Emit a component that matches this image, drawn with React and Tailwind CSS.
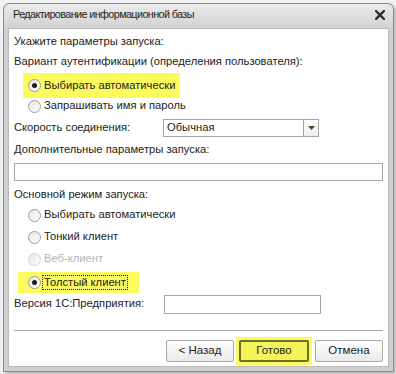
import React from 'react';

const Radio = ({ checked, disabled }) => (
  <span
    className={`w-[13px] h-[13px] rounded-full border flex items-center justify-center shrink-0 bg-gradient-to-br from-[#e6e6e6] to-white ${disabled ? 'border-[#d4d4d4]' : 'border-[#9c9c9c]'}`}
  >
    {checked && <span className="w-[5px] h-[5px] rounded-full bg-[#1c1c1c]" />}
  </span>
);

const RadioRow = ({ label, checked, disabled, className = '' }) => (
  <div className={`flex items-center pl-[14px] ${className}`}>
    <Radio checked={checked} disabled={disabled} />
    <span className={`ml-[3px] ${disabled ? 'text-[#b4b4b4]' : 'text-[#222]'}`}>{label}</span>
  </div>
);

const Button = ({ children, active }) => (
  <button
    className={`h-[22px] rounded-[2px] border text-[11.5px] text-[#222] flex items-center justify-center ${
      active
        ? 'w-[70px] border-[#6e6e2a] border-2 bg-[#f4f45a]'
        : 'w-[68px] border-[#a9a9a9] bg-gradient-to-b from-white to-[#e9e9e9]'
    }`}
  >
    {children}
  </button>
);

const App = () => {
  return (
    <div className="w-[396px] h-[374px] bg-[#f2f2f2] overflow-hidden font-['Liberation_Sans',Arial,sans-serif] text-[11.2px] leading-none whitespace-nowrap">
      <div className="ml-[3px] mt-[3px] w-[391px] h-[369px] rounded-t-[6px] border border-[#8c8c8c] bg-[#cfcfcf] flex flex-col shadow-[2px_2px_3px_rgba(0,0,0,0.25)]">
        {/* title bar */}
        <div className="h-[24px] shrink-0 flex items-center justify-between pl-[9px] pr-[8px] pb-[3px] rounded-t-[6px] bg-gradient-to-b from-[#ebebeb] to-[#d2d2d2]">
          <span className="text-[#1e1e1e] text-[10.8px] tracking-[-0.6px]">Редактирование информационной базы</span>
          <svg width="10" height="10" viewBox="0 0 10 10">
            <path d="M1 1 L9 9 M9 1 L1 9" stroke="#2e2e2e" strokeWidth="2.4" strokeLinecap="square" />
          </svg>
        </div>

        {/* body */}
        <div className="mx-[4px] mb-[4px] flex-1 bg-white border border-[#b9b9b9] pl-[5px] pr-[4px] text-[#222] flex flex-col">
          <div className="h-[20px] mt-[3px] flex items-center">Укажите параметры запуска:</div>
          <div className="h-[20px] flex items-center">Вариант аутентификации (определения пользователя):</div>

          <div className="mt-[1px] ml-[9px] w-[157px] h-[25px] bg-[#fbfb5e] flex items-center">
            <div className="flex items-center pl-[5px]">
              <Radio checked />
              <span className="ml-[3px]">Выбирать автоматически</span>
            </div>
          </div>
          <RadioRow label="Запрашивать имя и пароль" className="h-[16px]" />

          <div className="mt-[5px] h-[18px] flex items-center">
            <span className="w-[149px]">Скорость соединения:</span>
            <div className="w-[156px] h-[18px] border border-[#a6a6a6] flex">
              <span className="flex-1 flex items-center pl-[3px]">Обычная</span>
              <span className="w-[15px] border-l border-[#a6a6a6] flex items-center justify-center bg-gradient-to-b from-white to-[#ececec]">
                <svg width="7" height="4" viewBox="0 0 7 4">
                  <path d="M0 0 H7 L3.5 4 Z" fill="#4f4a1c" />
                </svg>
              </span>
            </div>
          </div>

          <div className="h-[26px] flex items-center">Дополнительные параметры запуска:</div>
          <div className="h-[18px] mr-[1px] border border-[#a6a6a6]" />

          <div className="mt-[5px] h-[18px] flex items-center">Основной режим запуска:</div>
          <RadioRow label="Выбирать автоматически" className="h-[22px]" />
          <RadioRow label="Тонкий клиент" className="h-[22px]" />
          <RadioRow label="Веб-клиент" disabled className="h-[22px]" />

          <div className="mt-[2px] ml-[4px] w-[121px] h-[21px] bg-[#fbfb5e] flex items-center">
            <div className="flex items-center pl-[10px]">
              <Radio checked />
              <span className="ml-[2px] px-[1px] py-[1px] outline outline-1 outline-dotted outline-[#222]">Толстый клиент</span>
            </div>
          </div>

          <div className="mt-[1px] h-[20px] flex items-center">
            <span className="w-[150px]">Версия 1С:Предприятия:</span>
            <div className="w-[157px] h-[19px] border border-[#a6a6a6]" />
          </div>

          <div className="mt-[16px] h-px mr-[1px] bg-[#a8a8a8]" />

          <div className="mt-[6px] flex items-center justify-end pr-[1px]">
            <Button>&lt; Назад</Button>
            <div className="ml-[2px] mr-[3px] p-[3px] bg-[#fbfb5e]">
              <Button active>Готово</Button>
            </div>
            <Button>Отмена</Button>
          </div>
        </div>
      </div>
    </div>
  );
};

export default App;
